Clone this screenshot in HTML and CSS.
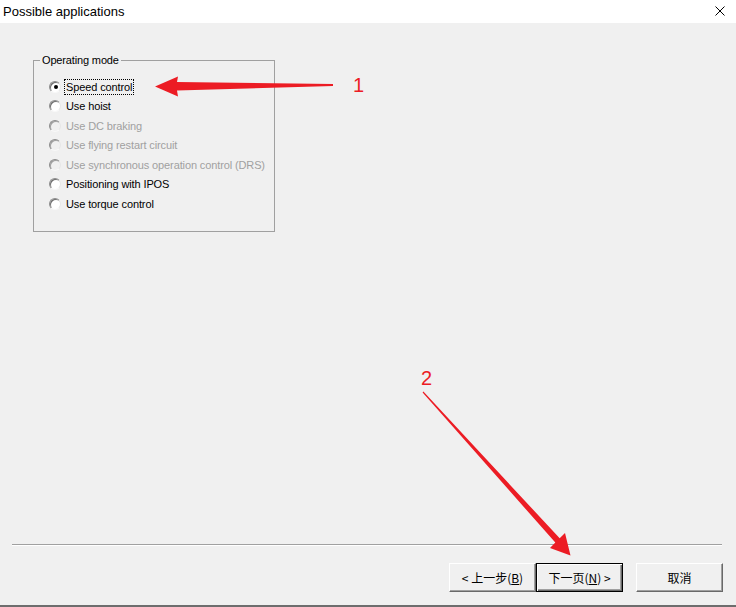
FILE: index.html
```html
<!DOCTYPE html>
<html>
<head>
<meta charset="utf-8">
<title>Possible applications</title>
<link rel="stylesheet" href="styles.css">
</head>
<body>
<div class="titlebar">
  <span class="title">Possible applications</span>
  <svg class="close" width="10" height="10" viewBox="0 0 10 10"><path d="M0.5 0.5 L9.5 9.5 M9.5 0.5 L0.5 9.5" stroke="#000" stroke-width="1" fill="none"/></svg>
</div>
<div class="main">
  <fieldset class="group">
    <legend>Operating mode</legend>
    <ul class="options">
      <li class="opt"><span class="radio checked"></span><span class="label focus">Speed control</span></li>
      <li class="opt"><span class="radio"></span><span class="label">Use hoist</span></li>
      <li class="opt disabled"><span class="radio"></span><span class="label">Use DC braking</span></li>
      <li class="opt disabled"><span class="radio"></span><span class="label">Use flying restart circuit</span></li>
      <li class="opt disabled"><span class="radio"></span><span class="label">Use synchronous operation control (DRS)</span></li>
      <li class="opt"><span class="radio"></span><span class="label">Positioning with IPOS</span></li>
      <li class="opt"><span class="radio"></span><span class="label">Use torque control</span></li>
    </ul>
  </fieldset>
</div>
<div class="footer">
  <div class="sep"></div>
  <div class="buttons">
    <button class="btn">&lt; 上一步(<u>B</u>)</button>
    <button class="btn default">下一页(<u>N</u>) &gt;</button>
    <button class="btn cancel">取消</button>
  </div>
  <div class="bottomline"></div>
</div>
<svg class="annot" width="736" height="607" viewBox="0 0 736 607">
  <polygon points="333,84 177,82 178,76.5 155,86.5 178,96.5 177,90.5 333,86" fill="#ec1c24"/>
  <text x="353" y="92" class="num">1</text>
  <polygon points="423.4,391.6 559.7,538.3 565,533 570.5,555.5 550,548 555.3,542.6 422.6,392.4" fill="#ec1c24"/>
  <text x="421" y="384.5" class="num">2</text>
</svg>
</body>
</html>
```
FILE: styles.css
```css
html, body {
  margin: 0;
  padding: 0;
}
body {
  width: 736px;
  height: 607px;
  background: #f0f0f0;
  font-family: "Liberation Sans", "Noto Sans CJK SC", sans-serif;
  font-size: 11px;
  color: #000;
  display: flex;
  flex-direction: column;
  position: relative;
  overflow: hidden;
}
.titlebar {
  height: 23px;
  flex: none;
  background: #fff;
  display: flex;
  align-items: center;
  justify-content: space-between;
  padding: 0 11px 0 3px;
  font-size: 13px;
}
.title {
  margin-top: -1px;
}
.close {
  display: block;
  margin-top: -1px;
}
.main {
  flex: 1;
  padding: 31px 0 0 33px;
}
.group {
  margin: 0;
  padding: 0;
  width: 242px;
  height: 178px;
  box-sizing: border-box;
  border: 1px solid #a0a0a0;
  min-width: 0;
}
.group legend {
  margin-left: 6px;
  padding: 0 2px;
  line-height: 13px;
  font-size: 11px;
  letter-spacing: -0.15px;
}
.options {
  list-style: none;
  margin: 10px 0 0 15px;
  padding: 0;
}
.opt {
  height: 19.5px;
  display: flex;
  align-items: center;
}
.radio {
  width: 12px;
  height: 12px;
  box-sizing: border-box;
  border-radius: 50%;
  border: 1px solid;
  border-color: #8c8c8c #e6e6e6 #f8f8f8 #8c8c8c;
  background: #fff;
  box-shadow: inset 1px 1px 0 #6e6e6e;
  display: flex;
  align-items: center;
  justify-content: center;
  flex: none;
}
.radio.checked::after {
  content: "";
  width: 4px;
  height: 4px;
  border-radius: 50%;
  background: #000;
  margin: 1px 0 0 1px;
}
.disabled .radio {
  background: #f0f0f0;
  box-shadow: inset 1px 1px 0 #a0a0a0;
}
.label {
  margin-left: 3px;
  padding: 0 1px;
  border: 1px solid transparent;
  line-height: 14px;
  letter-spacing: -0.12px;
}
.label.focus {
  border: 1px dotted #000;
}
.disabled .label {
  color: #a0a0a0;
}
.footer {
  height: 63px;
  flex: none;
  display: flex;
  flex-direction: column;
}
.sep {
  height: 0;
  border-top: 1px solid #a0a0a0;
  border-bottom: 1px solid #fff;
  margin: 0 14px 0 12px;
}
.buttons {
  display: flex;
  justify-content: flex-end;
  margin-top: 17px;
  padding-right: 13px;
}
.btn {
  width: 87px;
  height: 29px;
  box-sizing: border-box;
  margin: 0;
  padding: 0;
  font-family: "Noto Sans CJK SC", "Liberation Sans", sans-serif;
  font-size: 12px;
  color: #000;
  background: #f0f0f0;
  border: 1px solid;
  border-color: #fff #696969 #696969 #fff;
  box-shadow: inset -1px -1px 0 #a0a0a0;
  border-radius: 0;
}
.btn.default {
  border: 1px solid #000;
  box-shadow: inset 1px 1px 0 #fff, inset -1px -1px 0 #696969, inset -2px -2px 0 #a0a0a0;
}
.btn.cancel {
  margin-left: 13px;
}
.bottomline {
  margin-top: auto;
  height: 2px;
  background: #6d6d6d;
}
.annot {
  position: absolute;
  left: 0;
  top: 0;
  pointer-events: none;
}
.num {
  font-family: "Liberation Sans", sans-serif;
  font-size: 20px;
  fill: #ec1c24;
}
```
